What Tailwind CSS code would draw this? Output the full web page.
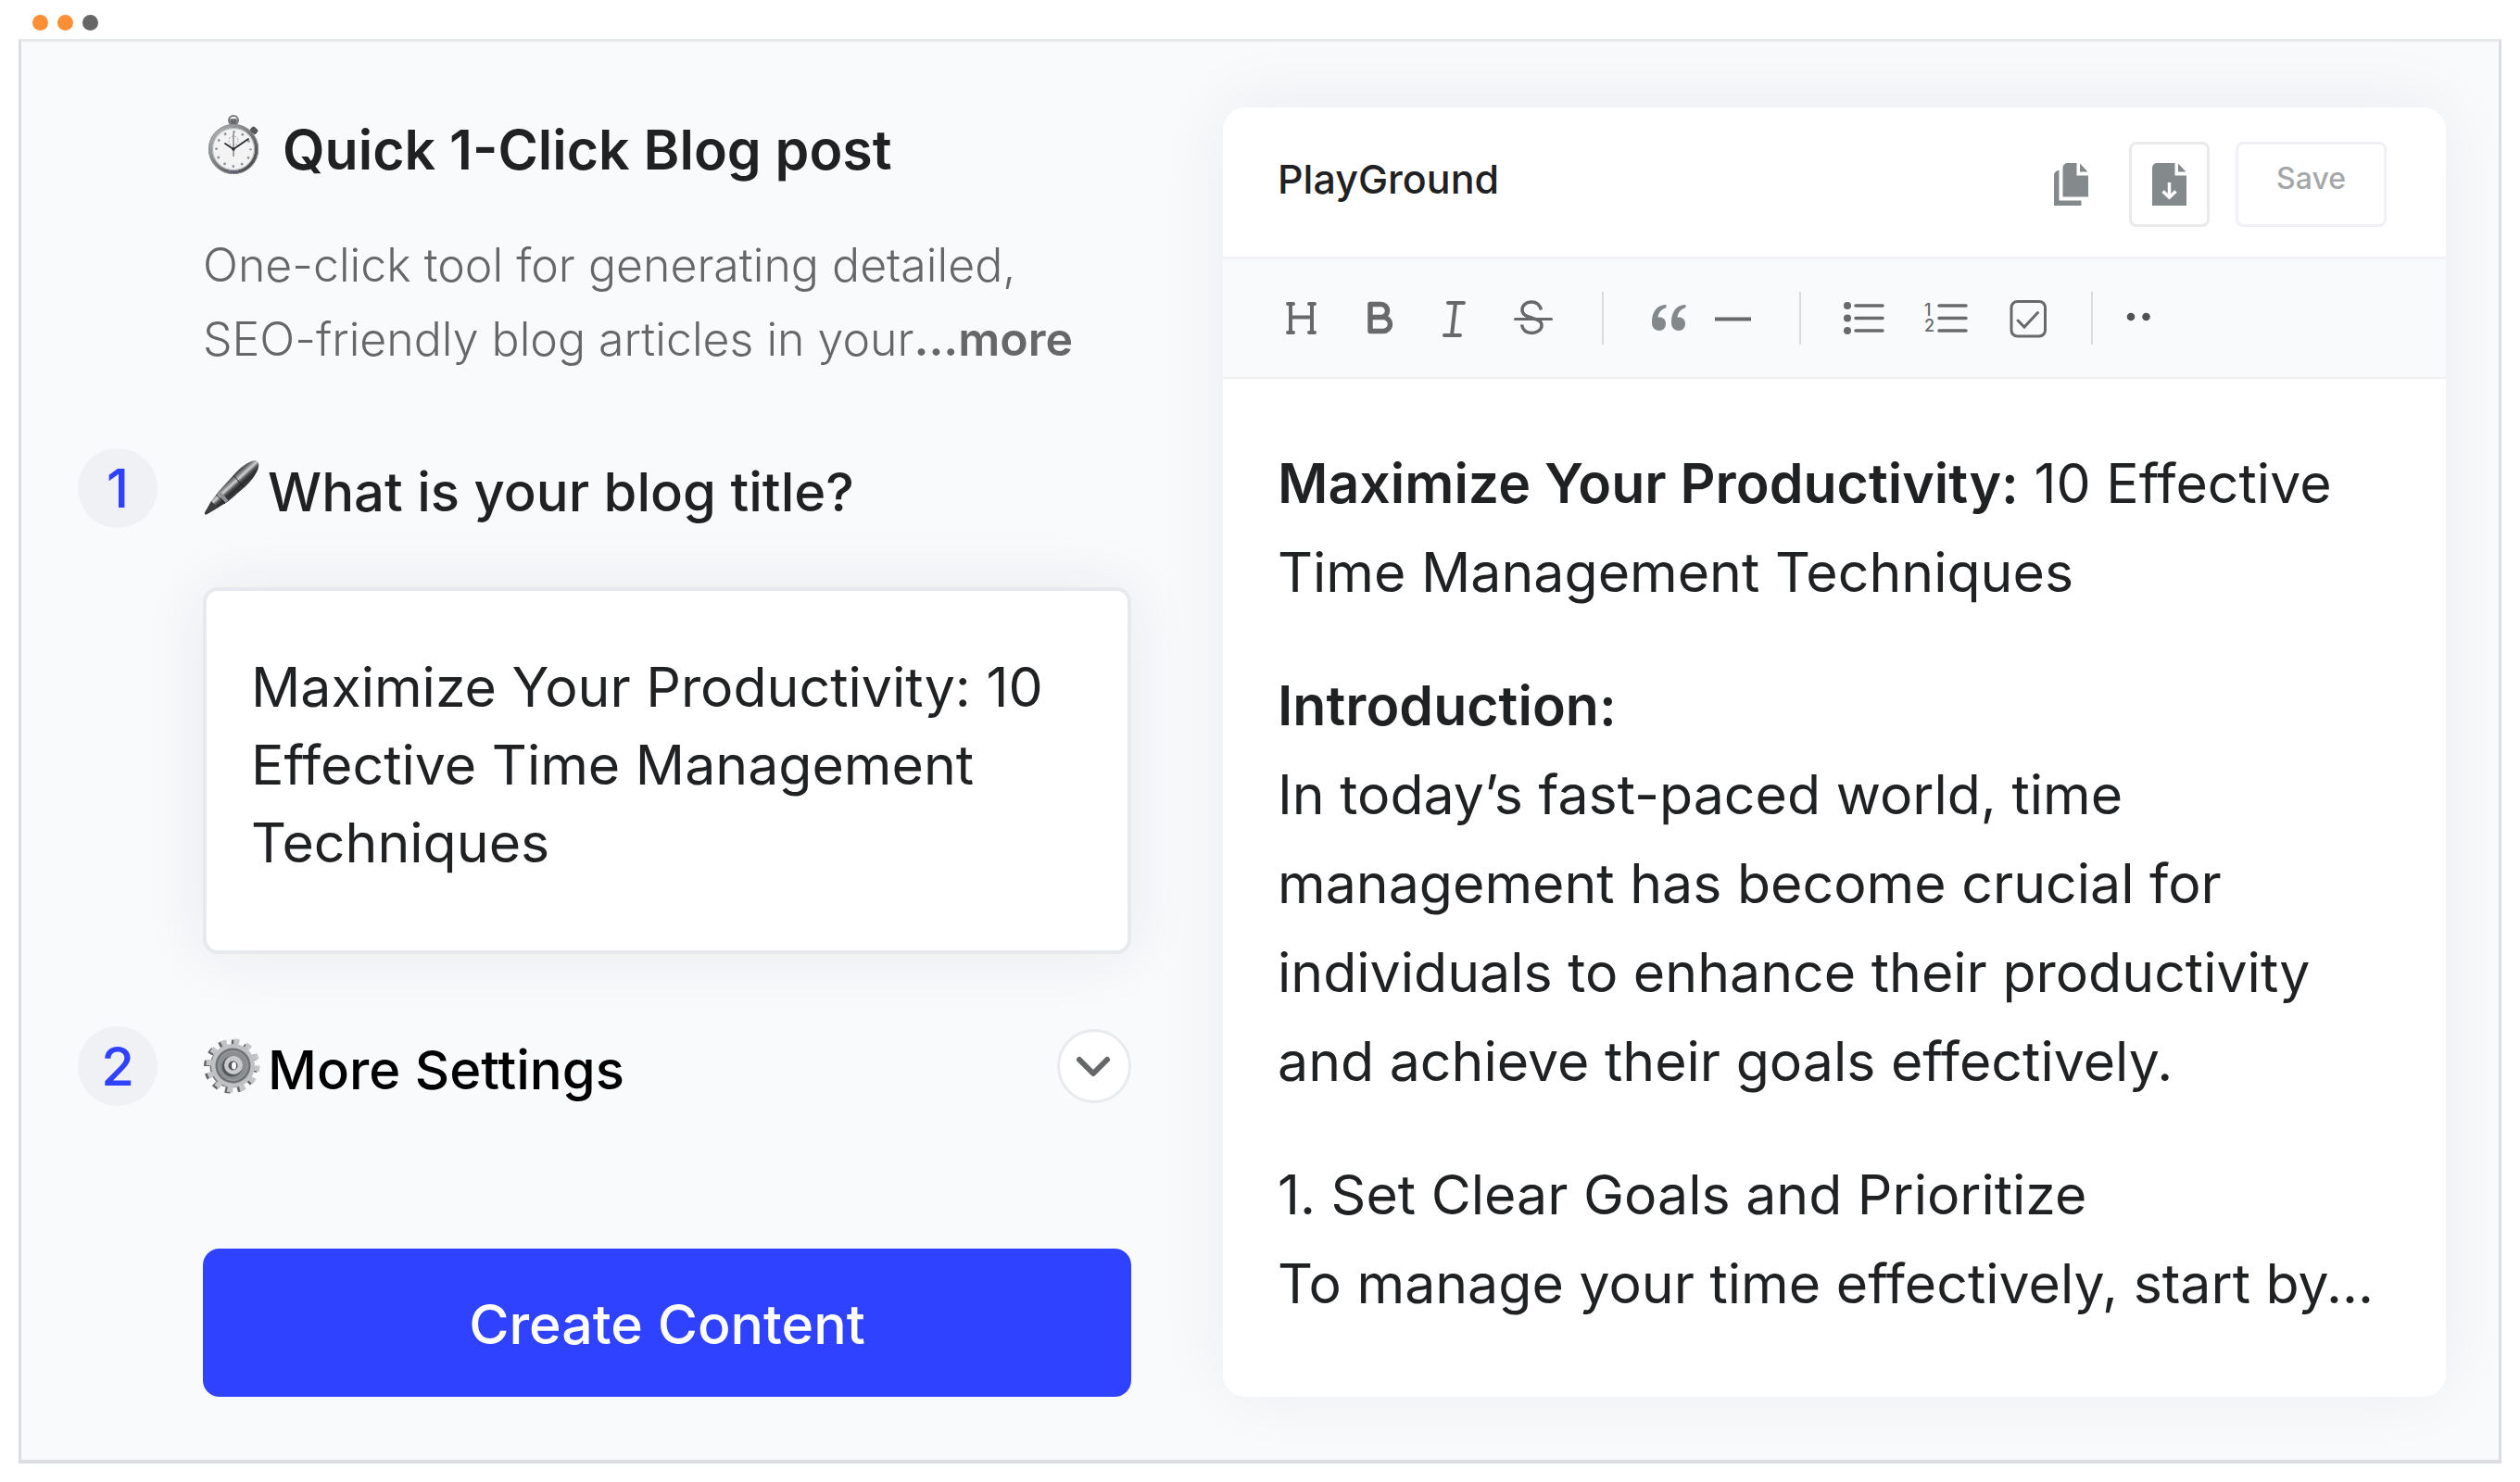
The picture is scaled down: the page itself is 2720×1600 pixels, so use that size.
<!DOCTYPE html>
<html lang="en">
<head>
  <meta charset="UTF-8" />
  <meta name="viewport" content="width=device-width, initial-scale=1.0"/>
  <title>Quick 1-Click Blog post</title>
  <script src="https://cdn.jsdelivr.net/npm/@tailwindcss/browser@4"></script>
</head>
<body class="min-h-screen flex flex-col bg-white text-[#1f2123] font-['Inter',sans-serif]">

  <!-- Window bar -->
  <header class="flex items-center gap-2.5 h-[42px] pt-1.5 pl-[35px]">
    <span class="size-[17px] rounded-full bg-[#fc8f36]"></span>
    <span class="size-[17px] rounded-full bg-[#fc8f36]"></span>
    <span class="size-[17px] rounded-full bg-[#666666]"></span>
  </header>

  <main class="flex-1 grid grid-cols-[1137fr_1320fr] gap-[99px] items-start mx-5 mb-5 pl-[61px] pr-[57px] bg-[#f9fafc] border-[3px] border-b-4 border-[#dcdde0] border-t-[#e7e8ea]">

    <!-- Form -->
    <section class="pt-[77px]">
      <div class="ml-[135px]">
        <h1 class="flex items-center gap-[22px] text-[59px] leading-[80px] font-semibold whitespace-nowrap">
          <svg class="w-16 h-20 shrink-0" viewBox="0 0 64 80" fill="none">
            <defs>
              <linearGradient id="rim" x1="0" y1="0" x2="1" y2="1">
                <stop offset="0" stop-color="#b9bbbd"/>
                <stop offset=".5" stop-color="#77797b"/>
                <stop offset="1" stop-color="#3c3e40"/>
              </linearGradient>
            </defs>
            <circle cx="33" cy="8" r="5" stroke="#77797b" stroke-width="2"/>
            <rect x="29" y="6" width="8" height="7" rx="1.5" fill="#85878a"/>
            <path d="M31 7v5M33 7v5M35 7v5" stroke="#4e5053" stroke-width="1"/>
            <path d="M50 24l4-4" stroke="#6b6d70" stroke-width="3"/>
            <rect x="51" y="15.500" width="8" height="6.500" rx="2" fill="#55575a" transform="rotate(42 55 19)"/>
            <circle cx="33" cy="39" r="25" fill="#f3f3f4" stroke="url(#rim)" stroke-width="4"/>
            <circle cx="33" cy="39" r="26.600" stroke="#8d8f92" stroke-width="1"/>
            <circle cx="33" cy="39" r="22.500" stroke="#a9abad" stroke-width="1"/>
            <circle cx="33" cy="39" r="18.500" stroke="#8b8d90" stroke-width="2.500" stroke-dasharray="2.400 7.286" stroke-dashoffset="1.200"/>
            <circle cx="33" cy="30" r="5" stroke="#b5b7b9" stroke-width="1.500" stroke-dasharray="1.500 2"/>
            <path d="M33 22v25" stroke="#6a6c6f" stroke-width="1.200"/>
            <path d="M33 39l16-11M33 39l-9-6" stroke="#2c2e30" stroke-width="1.800" stroke-linecap="round"/>
            <circle cx="33" cy="39" r="1.800" fill="#2c2e30"/>
            <path d="M28 63h10" stroke="#7c85d8" stroke-width="1.200" stroke-dasharray="1.500 1.500"/>
          </svg>
          Quick 1-Click Blog post
        </h1>
        <p class="mt-11 text-[50px] leading-[80px] font-light text-[#666769]">
          One-click tool for generating detailed,<br>
          SEO-friendly blog articles in your<a href="#more" class="font-semibold">...more</a>
        </p>
      </div>

      <!-- Step 1 -->
      <div class="mt-[78px] flex items-center gap-[49px]">
        <span class="size-[86px] shrink-0 flex items-center justify-center rounded-full bg-[#f0f1f5] text-[#2f42ff] text-[58px] font-medium">1</span>
        <div class="flex items-center gap-1.5">
          <svg class="size-16 shrink-0" viewBox="0 0 64 64" fill="none">
            <defs>
              <linearGradient id="barrel" gradientUnits="userSpaceOnUse" x1="26" y1="24" x2="37" y2="36">
                <stop offset="0" stop-color="#3a3b3d"/>
                <stop offset=".2" stop-color="#77797b"/>
                <stop offset=".42" stop-color="#d2d2d4"/>
                <stop offset=".6" stop-color="#5b5d5f"/>
                <stop offset=".8" stop-color="#2b2c2e"/>
                <stop offset="1" stop-color="#36383a"/>
              </linearGradient>
            </defs>
            <path d="M2 58.500L9 46L17 35.500L33 18C43 7 53 1 58 2.500C62.500 5 61 16 45 31L27 46.500L13 55L4.500 60C2.500 61 1.500 60 2 58.500z" fill="url(#barrel)"/>
            <path d="M2 58.500L9 46L16 53L4.500 60C2.500 61 1.500 60 2 58.500z" fill="#3b3c3e"/>
            <path d="M17 36.500l9 10" stroke="#8f9194" stroke-width="4"/>
            <path d="M14.500 39l9.500 10M33 18l11 13" stroke="#252628" stroke-width="1"/>
          </svg>
          <label for="blogTitle" class="pt-2 text-[58px] leading-[78px] font-medium whitespace-nowrap">What is your blog title?</label>
        </div>
      </div>
      <textarea id="blogTitle" rows="3" class="block mt-16 ml-[135px] w-[calc(100%-135px)] h-[396px] resize-none overflow-hidden rounded-2xl border-4 border-[#e8e9ec] bg-white px-12 py-[62px] text-[59px] leading-[84px] shadow-[0_0_70px_rgba(30,32,45,0.08)] outline-none">Maximize Your Productivity: 10 Effective Time Management Techniques</textarea>

      <!-- Step 2 -->
      <div class="mt-[78px] flex items-center gap-[49px]">
        <span class="size-[86px] shrink-0 flex items-center justify-center rounded-full bg-[#f0f1f5] text-[#2f42ff] text-[58px] font-medium">2</span>
        <div class="flex-1 flex items-center gap-1.5">
          <svg class="size-16 shrink-0" viewBox="0 0 64 64" fill="none">
            <circle cx="30" cy="32.500" r="26" stroke="#646668" stroke-width="6" stroke-dasharray="6 7.614"/>
            <circle cx="30.500" cy="32.500" r="23" fill="#77797b"/>
            <circle cx="32.500" cy="31.500" r="26" stroke="#c4c5c7" stroke-width="6" stroke-dasharray="6 7.614"/>
            <circle cx="32.500" cy="31.500" r="23.500" fill="#c0c1c3"/>
            <circle cx="32.500" cy="31.500" r="19" fill="#6f7376"/>
            <circle cx="32.500" cy="31.500" r="16" fill="#8a8e91" stroke="#a0a3a6" stroke-width="1"/>
            <circle cx="31.500" cy="32.500" r="11" fill="#55585b"/>
            <circle cx="33" cy="31" r="10" fill="#c9cacc"/>
            <circle cx="32.500" cy="31.500" r="5" fill="#515356"/>
            <ellipse cx="33.500" cy="31.500" rx="2.500" ry="4" fill="#f9fafc"/>
          </svg>
          <h2 class="pt-2 text-[58px] leading-[78px] font-medium text-black whitespace-nowrap">More Settings</h2>
          <button type="button" aria-label="Expand settings" class="ml-auto size-20 shrink-0 flex items-center justify-center rounded-full border-[3px] border-[#e8eaed] bg-white">
            <svg class="w-10 h-6" viewBox="0 0 40 24" fill="none" stroke="#666769" stroke-width="6" stroke-linecap="round" stroke-linejoin="round">
              <path d="M4 5l15 15L34 5"/>
            </svg>
          </button>
        </div>
      </div>

      <div class="ml-[135px] mt-[154px]">
        <button type="submit" class="w-full h-40 pt-1 rounded-[18px] bg-[#2f42ff] text-white text-[59px] font-medium">Create Content</button>
      </div>
    </section>

    <!-- Playground -->
    <section class="mt-[71px] rounded-3xl bg-white shadow-[0_-6px_80px_rgba(30,32,45,0.06)]">
      <div class="flex items-center pt-[37px] pb-8 pl-[59px] pr-16 border-b-[3px] border-[#f1f2f5]">
        <h2 class="pb-3 text-[43px] leading-[56px] font-medium">PlayGround</h2>
        <button type="button" aria-label="Copy" class="ml-auto">
          <svg class="w-[38px] h-[46px]" viewBox="0 0 38 46" fill="#84898c">
            <path d="M5.500 8v32.500H29.500V46H0V13.500C0 10.500 2 8 5.500 8z"/>
            <path d="M15 0H24.500V13.500H37V36.500H9.500V5.500C9.500 2 12 0 15 0z"/>
            <path d="M28 .5V9.500H36.500z"/>
          </svg>
        </button>
        <button type="button" aria-label="Download" class="ml-[43px] w-[87px] h-[92px] flex items-center justify-center rounded-lg border-[3px] border-[#e9eaec]">
          <svg class="w-[38px] h-[46px]" viewBox="0 0 38 46" fill="#84898c">
            <path d="M5.500 0H24.500V13.500H37V46H0V5.500C0 2 2.500 0 5.500 0z"/>
            <path d="M28 .5V9.500H36.500z"/>
            <path d="M18.500 21v15M11.500 30.500l7 6.500 7-6.500" fill="none" stroke="#fff" stroke-width="3.500"/>
          </svg>
        </button>
        <button type="button" class="ml-7 w-[163px] h-[92px] pb-3 rounded-lg border-[3px] border-[#f0f0f5] text-[32px] text-[#a5a7a9] font-medium">Save</button>
      </div>

      <div class="flex items-center py-[35px] pl-[61px] bg-[#f9fafc] border-b-2 border-[#f0f1f4] text-[#67696b]">
        <div class="flex gap-9">
          <button type="button" aria-label="Heading">
            <svg class="size-12" viewBox="0 0 48 48" fill="none" stroke="currentColor" stroke-width="4" stroke-linecap="round">
              <path d="M9 8h6M32 8h6M9 39h6M32 39h6M12 8v31M35 8v31M12 22.500h23"/>
            </svg>
          </button>
          <button type="button" aria-label="Bold">
            <svg class="size-12" viewBox="0 0 48 48" fill="none" stroke="currentColor" stroke-width="5.500" stroke-linejoin="round">
              <path d="M14 8.500H25.500a7 7 0 0 1 0 14H14zM14 22.500H28a7.300 7.300 0 0 1 0 15H14z"/>
            </svg>
          </button>
          <button type="button" aria-label="Italic">
            <svg class="size-12" viewBox="0 0 48 48" fill="none" stroke="currentColor" stroke-width="4" stroke-linecap="round">
              <path d="M14 7h17M10 42h17M22 7l-4 35"/>
            </svg>
          </button>
          <button type="button" aria-label="Strikethrough">
            <svg class="size-12" viewBox="0 0 48 48" fill="none" stroke="currentColor" stroke-width="3.500">
              <path d="M30.500 14.500C29 9 25 6 20 6C14 6 10 10 10 14.500C10 20 15 21.500 20 23C26 25 31 26 31 31.500C31 36 26 39.500 20.500 39.500C14.500 39.500 10.500 36 9.500 30.500"/>
              <path d="M2.500 24.500h39" stroke-width="3" stroke-linecap="round"/>
            </svg>
          </button>
        </div>
        <span class="mx-12 w-0.5 h-[57px] bg-[#dadbdd]"></span>
        <div class="flex gap-[22px]">
          <button type="button" aria-label="Quote">
            <svg class="size-12" viewBox="0 0 48 48" fill="#83888b">
              <path d="M18 9C9 10 4 17 4 28c0 5.500 3 9 8 9 4 0 7-3 7-7.500s-3-7-7-7c-.6 0-1 0-1.500.200C11 18 13.500 14.500 18.500 12.500c2-1 1.500-3.700-.5-3.500z"/>
              <path d="M39 9c-9 1-14 8-14 19 0 5.500 3 9 8 9 4 0 7-3 7-7.500s-3-7-7-7c-.6 0-1 0-1.500.200.500-4.700 3-8.200 8-10.200 2-1 1.500-3.700-.5-3.500z"/>
            </svg>
          </button>
          <button type="button" aria-label="Divider">
            <svg class="size-12" viewBox="0 0 48 48" stroke="currentColor" stroke-width="4">
              <path d="M2 24.500h39"/>
            </svg>
          </button>
        </div>
        <span class="mx-[45px] w-0.5 h-[57px] bg-[#dadbdd]"></span>
        <div class="flex gap-10">
          <button type="button" aria-label="Bulleted list">
            <svg class="size-12" viewBox="0 0 48 48" fill="currentColor">
              <circle cx="5" cy="10" r="4"/>
              <circle cx="5" cy="23.500" r="4"/>
              <circle cx="5" cy="37" r="4"/>
              <path d="M14 10h29M14 23.500h29M14 37h29" stroke="currentColor" stroke-width="3.500" stroke-linecap="round"/>
            </svg>
          </button>
          <button type="button" aria-label="Numbered list">
            <svg class="size-12" viewBox="0 0 48 48" fill="currentColor">
              <text x="0" y="21" font-size="18" font-weight="500">1</text>
              <text x="0" y="38" font-size="18" font-weight="500">2</text>
              <path d="M16 10h29M16 23.500h29M16 37h29" stroke="currentColor" stroke-width="3.500" stroke-linecap="round"/>
            </svg>
          </button>
          <button type="button" aria-label="Checklist">
            <svg class="size-12" viewBox="0 0 48 48" fill="none" stroke="currentColor" stroke-width="3" stroke-linecap="round">
              <rect x="6" y="5.500" width="36.500" height="37.500" rx="6.500"/>
              <path d="M13 26l7 7 14.500-15.500"/>
            </svg>
          </button>
        </div>
        <span class="ml-11 mr-9 w-0.5 h-[57px] bg-[#dadbdd]"></span>
        <button type="button" aria-label="More tools">
          <svg class="w-7 h-12" viewBox="0 0 28 48" fill="#505254">
            <circle cx="5" cy="22" r="4.300"/>
            <circle cx="21.500" cy="22" r="4.300"/>
          </svg>
        </button>
      </div>

      <article class="pt-[65px] pb-[74px] pl-[59px] pr-14 space-y-12 text-[59px] leading-[96px]">
        <p><strong class="font-semibold">Maximize Your Productivity:</strong> 10 Effective<br>Time Management Techniques</p>
        <p><strong class="font-semibold">Introduction:</strong><br>In today’s fast-paced world, time<br>management has become crucial for<br>individuals to enhance their productivity<br>and achieve their goals effectively.</p>
        <p class="whitespace-nowrap">1. Set Clear Goals and Prioritize<br>To manage your time effectively, start by...</p>
      </article>
    </section>
  </main>
</body>
</html>
